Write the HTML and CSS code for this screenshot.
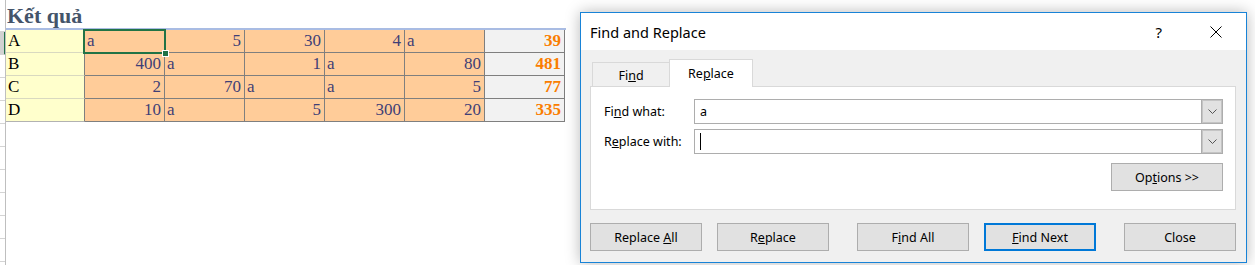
FILE: index.html
```html
<!DOCTYPE html>
<html lang="vi">

<head>
    <meta charset="UTF-8">
    <meta name="viewport" content="width=device-width, initial-scale=1.0">
    <title>Kết quả</title>

    <link rel="stylesheet" href="styles.css">
</head>

<body>
    <!-- HOJA -->
    <div class="sheet">
        <div class="heads">
            <div class="rh rh-title"></div>
            <div class="rh rh-sel"></div>
            <div class="rh"></div>
            <div class="rh"></div>
            <div class="rh"></div>
            <div class="rh"></div>
            <div class="rh"></div>
            <div class="rh"></div>
            <div class="rh"></div>
            <div class="rh"></div>
            <div class="rh"></div>
        </div>

        <div class="content">
            <h1 class="title">Kết quả</h1>
            <div class="grid" id="grid"></div>
        </div>
    </div>

    <!-- DIALOGO -->
    <div class="dialog">
        <div class="titlebar">
            <span class="dtitle">Find and Replace</span>
            <span class="help">?</span>
            <svg class="close" width="12" height="12" viewBox="0 0 12 12">
                <path d="M0.5 0.5 L11.5 11.5 M11.5 0.5 L0.5 11.5" stroke="#000" stroke-width="1" fill="none" />
            </svg>
        </div>

        <div class="dbody">
            <div class="tabs">
                <div class="tab">Fi<u>n</u>d</div>
                <div class="tab active">Re<u>p</u>lace</div>
            </div>

            <div class="panel">
                <div class="field">
                    <label>Fi<u>n</u>d what:</label>
                    <div class="combo">
                        <span class="val">a</span>
                        <span class="drop"><svg width="9" height="5" viewBox="0 0 9 5"><path d="M0.5 0.5 L4.5 4.5 L8.5 0.5" stroke="#555" fill="none" /></svg></span>
                    </div>
                </div>
                <div class="field">
                    <label>R<u>e</u>place with:</label>
                    <div class="combo">
                        <span class="val"><span class="caret"></span></span>
                        <span class="drop"><svg width="9" height="5" viewBox="0 0 9 5"><path d="M0.5 0.5 L4.5 4.5 L8.5 0.5" stroke="#555" fill="none" /></svg></span>
                    </div>
                </div>
                <div class="opts">
                    <button class="btn">Op<u>t</u>ions &gt;&gt;</button>
                </div>
            </div>

            <div class="actions">
                <button class="btn">Replace <u>A</u>ll</button>
                <button class="btn">R<u>e</u>place</button>
                <button class="btn wide">F<u>i</u>nd All</button>
                <button class="btn focus"><u>F</u>ind Next</button>
                <button class="btn wide">Close</button>
            </div>
        </div>
    </div>

    <script>
        //DATOS
        const filas = [
            ['A', 'a', 5, 30, 4, 'a', 39],
            ['B', 400, 'a', 1, 'a', 80, 481],
            ['C', 2, 70, 'a', 'a', 5, 77],
            ['D', 10, 'a', 5, 300, 20, 335]
        ];

        //PINTAR TABLA
        let miHTML = '';
        for (let i = 0; i < filas.length; i++) {
            const f = filas[i];
            miHTML += `<div class="c lbl">${f[0]}</div>`;
            for (let j = 1; j < 6; j++) {
                const num = typeof f[j] === 'number';
                miHTML += `<div class="c inp ${num ? 'num' : ''} ${i == 0 && j == 1 ? 'sel' : ''}">${f[j]}</div>`;
            }
            miHTML += `<div class="c tot">${f[6]}</div>`;
        }
        document.querySelector('#grid').innerHTML = miHTML;
    </script>
</body>

</html>
```

FILE: styles.css
```css
:root {
    --ui: "Noto Sans", "Open Sans", sans-serif;
    --sheet: "Liberation Serif", serif;
    --bd: #ADADAD;
}

body {
    margin: 0;
    background: #fff;
    width: 1255px;
    height: 265px;
    overflow: hidden;
    position: relative;
}

/* hoja */
.sheet {
    display: flex;
}

.heads {
    width: 5px;
    border-right: 1px solid #BFBFBF;
    height: 265px;
    overflow: hidden;
}

.rh {
    height: 22px;
    border-bottom: 1px solid #D4D4D4;
}

.rh-title {
    height: 31px;
}

.rh-sel {
    background: #D2D2D2;
    border-right: 2px solid #217346;
    margin-right: -1px;
}

.content {
    width: 560px;
}

.title {
    margin: 0;
    height: 30px;
    box-sizing: border-box;
    padding: 4px 0 0 1px;
    font: bold 22px/24px var(--sheet);
    color: #44546A;
    border-bottom: 2px solid #A9BCE3;
}

.grid {
    display: grid;
    grid-template-columns: 79px repeat(6, 80px);
    grid-auto-rows: 23px;
    font: 17px/22px var(--sheet);
}

.c {
    box-sizing: border-box;
    border-right: 1px solid #7F7F7F;
    border-bottom: 1px solid #7F7F7F;
    padding: 0 3px 0 2px;
    white-space: nowrap;
    position: relative;
}

.lbl {
    background: #FFFFCC;
    color: #000;
    border-bottom-color: #D9D9C0;
}

.grid .lbl:nth-last-child(7) {
    border-bottom-color: #B2B2B2;
}

.inp {
    background: #FFCC99;
    color: #3F3F76;
}

.num {
    text-align: right;
}

.tot {
    background: #F2F2F2;
    color: #FA7D00;
    font-weight: bold;
    text-align: right;
}

.sel {
    z-index: 3;
}

.sel::after {
    content: "";
    position: absolute;
    left: -2px;
    top: -1px;
    right: -2px;
    bottom: -2px;
    border: 2px solid #217346;
}

.sel::before {
    content: "";
    position: absolute;
    right: -5px;
    bottom: -5px;
    width: 5px;
    height: 5px;
    background: #217346;
    border: 1px solid #fff;
    z-index: 2;
}

/* dialogo */
.dialog {
    position: absolute;
    left: 580px;
    top: 12px;
    width: 667px;
    height: 251px;
    box-sizing: border-box;
    border: 1px solid #1883D7;
    background: #F0F0F0;
    box-shadow: 0 0 14px rgba(0, 0, 0, 0.28);
    font-family: var(--ui);
    font-size: 12.5px;
    color: #000;
}

.titlebar {
    height: 37px;
    background: #fff;
    display: flex;
    align-items: center;
    padding-left: 9px;
}

.dtitle {
    font-size: 14.5px;
    flex: 1;
}

.help {
    font-size: 15px;
    margin-right: 48px;
}

.close {
    margin-right: 24px;
}

.dbody {
    padding: 9px 10px 0 9px;
}

.tabs {
    display: flex;
    align-items: flex-end;
    height: 28px;
    padding-left: 2px;
    margin-bottom: -1px;
}

.tab {
    width: 77px;
    height: 25px;
    box-sizing: border-box;
    border: 1px solid #D9D9D9;
    border-bottom: none;
    border-right: none;
    text-align: center;
    line-height: 25px;
}

.tab.active {
    width: 84px;
    height: 28px;
    background: #fff;
    border-right: 1px solid #D9D9D9;
    line-height: 28px;
    position: relative;
    z-index: 1;
}

.panel {
    height: 124px;
    box-sizing: border-box;
    background: #fff;
    border: 1px solid #D9D9D9;
    padding: 12px 12px 0 13px;
}

.field {
    display: flex;
    align-items: center;
    height: 25px;
    margin-bottom: 5px;
}

.field label {
    width: 90px;
}

.combo {
    flex: 1;
    height: 25px;
    box-sizing: border-box;
    border: 1px solid var(--bd);
    display: flex;
}

.val {
    flex: 1;
    padding-left: 5px;
    line-height: 22px;
    display: flex;
    align-items: center;
}

.caret {
    width: 1px;
    height: 17px;
    background: #000;
}

.drop {
    width: 20px;
    background: #E1E1E1;
    border-left: 1px solid var(--bd);
    box-shadow: inset 0 0 0 1px #C4C4C4;
    display: flex;
    align-items: center;
    justify-content: center;
}

.opts {
    display: flex;
    justify-content: flex-end;
    margin-top: 9px;
}

.btn {
    width: 112px;
    height: 28px;
    box-sizing: border-box;
    background: #E1E1E1;
    border: 1px solid var(--bd);
    font-family: var(--ui);
    font-size: 12.5px;
    color: #000;
    padding: 0;
}

.actions {
    display: flex;
    gap: 15px;
    margin-top: 13px;
}

.actions .wide {
    margin-left: 13px;
}

.btn.focus {
    border: 2px solid #0078D7;
}
```
